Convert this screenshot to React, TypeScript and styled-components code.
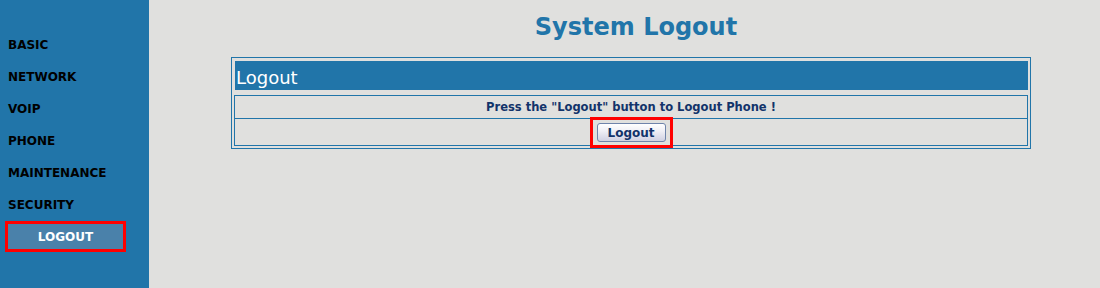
import React from "react";
import styled, { createGlobalStyle } from "styled-components";

const BLUE = "#2175a9";
const NAVY = "#12336a";

const GlobalStyle = createGlobalStyle`
  html, body {
    margin: 0;
    padding: 0;
    height: 288px;
    background: #e0e0de;
    font-family: "DejaVu Sans", Verdana, sans-serif;
  }
  #root {
    height: 100%;
  }
`;

const Page = styled.div`
  display: flex;
  height: 100%;
`;

const Sidebar = styled.nav`
  width: 149px;
  flex-shrink: 0;
  background: ${BLUE};
  padding-top: 29px;
  box-sizing: border-box;
  display: flex;
  flex-direction: column;
`;

const MenuItem = styled.div<{ active?: boolean }>`
  height: ${(p) => (p.active ? 31 : 32)}px;
  line-height: ${(p) => (p.active ? 27 : 32)}px;
  font-size: 12px;
  font-weight: bold;
  color: ${(p) => (p.active ? "#ffffff" : "#000000")};
  box-sizing: border-box;
  ${(p) =>
    p.active
      ? `
    width: 121px;
    margin-left: 5px;
    border: 3px solid #ff0000;
    background: #4a81aa;
    text-align: center;
  `
      : `
    padding-left: 8px;
  `}
`;

const Main = styled.main`
  flex: 1;
  padding: 12px 0 0 82px;
`;

const Title = styled.h1`
  width: 800px;
  margin: 0 0 15px;
  padding-left: 10px;
  box-sizing: border-box;
  text-align: center;
  font-size: 24px;
  line-height: 30px;
  font-weight: bold;
  color: ${BLUE};
`;

const Panel = styled.div`
  width: 800px;
  box-sizing: border-box;
  border: 1px solid ${BLUE};
  padding: 3px 2px 2px 2px;
`;

const PanelHeader = styled.div`
  height: 29px;
  margin-left: 1px;
  padding: 5px 0 0 1px;
  box-sizing: border-box;
  background: ${BLUE};
  color: #ffffff;
  font-size: 18px;
  line-height: 24px;
`;

const Rows = styled.div`
  margin-top: 5px;
  border: 1px solid ${BLUE};
`;

const Row = styled.div<{ h: number }>`
  height: ${(p) => p.h}px;
  display: flex;
  align-items: center;
  justify-content: center;
  font-size: 11.5px;
  font-weight: bold;
  color: ${NAVY};
  & + & {
    border-top: 1px solid ${BLUE};
  }
`;

const Highlight = styled.span`
  position: relative;
  display: inline-flex;
  &::after {
    content: "";
    position: absolute;
    left: -7px;
    right: -7px;
    top: -5px;
    bottom: -6px;
    border: 3px solid #ff0000;
    pointer-events: none;
  }
`;

const Button = styled.button`
  width: 69px;
  height: 19px;
  padding: 0;
  margin-top: 1px;
  border: 1px solid #6f84ab;
  border-radius: 3px;
  background: linear-gradient(#ffffff, #f0f0f6 40%, #cfd0e2);
  font-family: "DejaVu Sans", Verdana, sans-serif;
  font-size: 12px;
  font-weight: bold;
  color: ${NAVY};
  cursor: pointer;
`;

const menu = ["BASIC", "NETWORK", "VOIP", "PHONE", "MAINTENANCE", "SECURITY"];

export default function App() {
  return (
    <>
      <GlobalStyle />
      <Page>
        <Sidebar>
          {menu.map((m) => (
            <MenuItem key={m}>{m}</MenuItem>
          ))}
          <MenuItem active>LOGOUT</MenuItem>
        </Sidebar>
        <Main>
          <Title>System Logout</Title>
          <Panel>
            <PanelHeader>Logout</PanelHeader>
            <Rows>
              <Row h={22}>Press the "Logout" button to Logout Phone !</Row>
              <Row h={26}>
                <Highlight>
                  <Button>Logout</Button>
                </Highlight>
              </Row>
            </Rows>
          </Panel>
        </Main>
      </Page>
    </>
  );
}
